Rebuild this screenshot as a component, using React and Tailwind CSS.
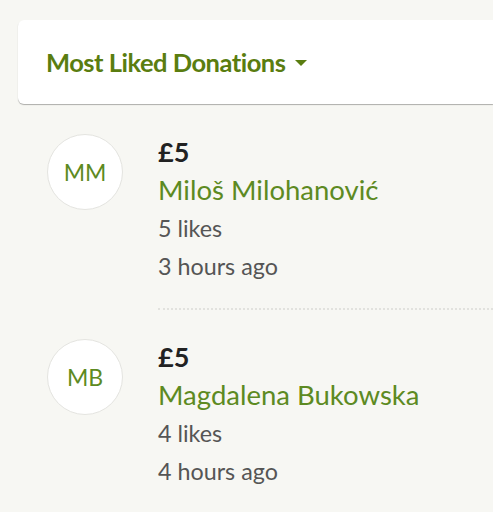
const donations = [
  { initials: "MM", amount: "£5", name: "Miloš Milohanović", likes: "5 likes", time: "3 hours ago" },
  { initials: "MB", amount: "£5", name: "Magdalena Bukowska", likes: "4 likes", time: "4 hours ago" },
];

function DonationRow({ d }) {
  return (
    <div className="flex items-start">
      <div className="mt-px ml-[47px] w-[76px] h-[76px] shrink-0 rounded-full bg-white border border-[#e4e4e0] flex items-center justify-center text-[23px] text-[#5d8a22]">
        {d.initials}
      </div>
      <div className="ml-[35px] leading-[38px]">
        <p className="text-[27px] font-bold text-[#222]">{d.amount}</p>
        <p className="text-[27.5px] text-[#5d8a22]">{d.name}</p>
        <p className="text-[23.3px] text-[#555]">{d.likes}</p>
        <p className="text-[23.3px] text-[#555]">{d.time}</p>
      </div>
    </div>
  );
}

export default function App() {
  return (
    <div className="w-[493px] h-[512px] overflow-hidden bg-[#f7f7f3] pt-5 font-['Lato',sans-serif]">
      <div className="ml-[18px] h-[84px] bg-white rounded-l-md shadow-[0_1px_1px_rgba(0,0,0,0.3)] flex items-center pl-[28px]">
        <span className="text-[25.5px] font-bold tracking-[-0.5px] text-[#5a7d10]">Most Liked Donations</span>
        <svg width="14" height="8" viewBox="0 0 14 8" className="ml-[9px] mt-[2px]">
          <path d="M1 1 L13 1 L7 7 Z" fill="#5a7d10" />
        </svg>
      </div>
      <div className="mt-[29px]">
        <DonationRow d={donations[0]} />
        <div className="ml-[158px] mt-[23px] mb-[28px] border-t-2 border-dotted border-[#e2e2de]" />
        <DonationRow d={donations[1]} />
      </div>
    </div>
  );
}
